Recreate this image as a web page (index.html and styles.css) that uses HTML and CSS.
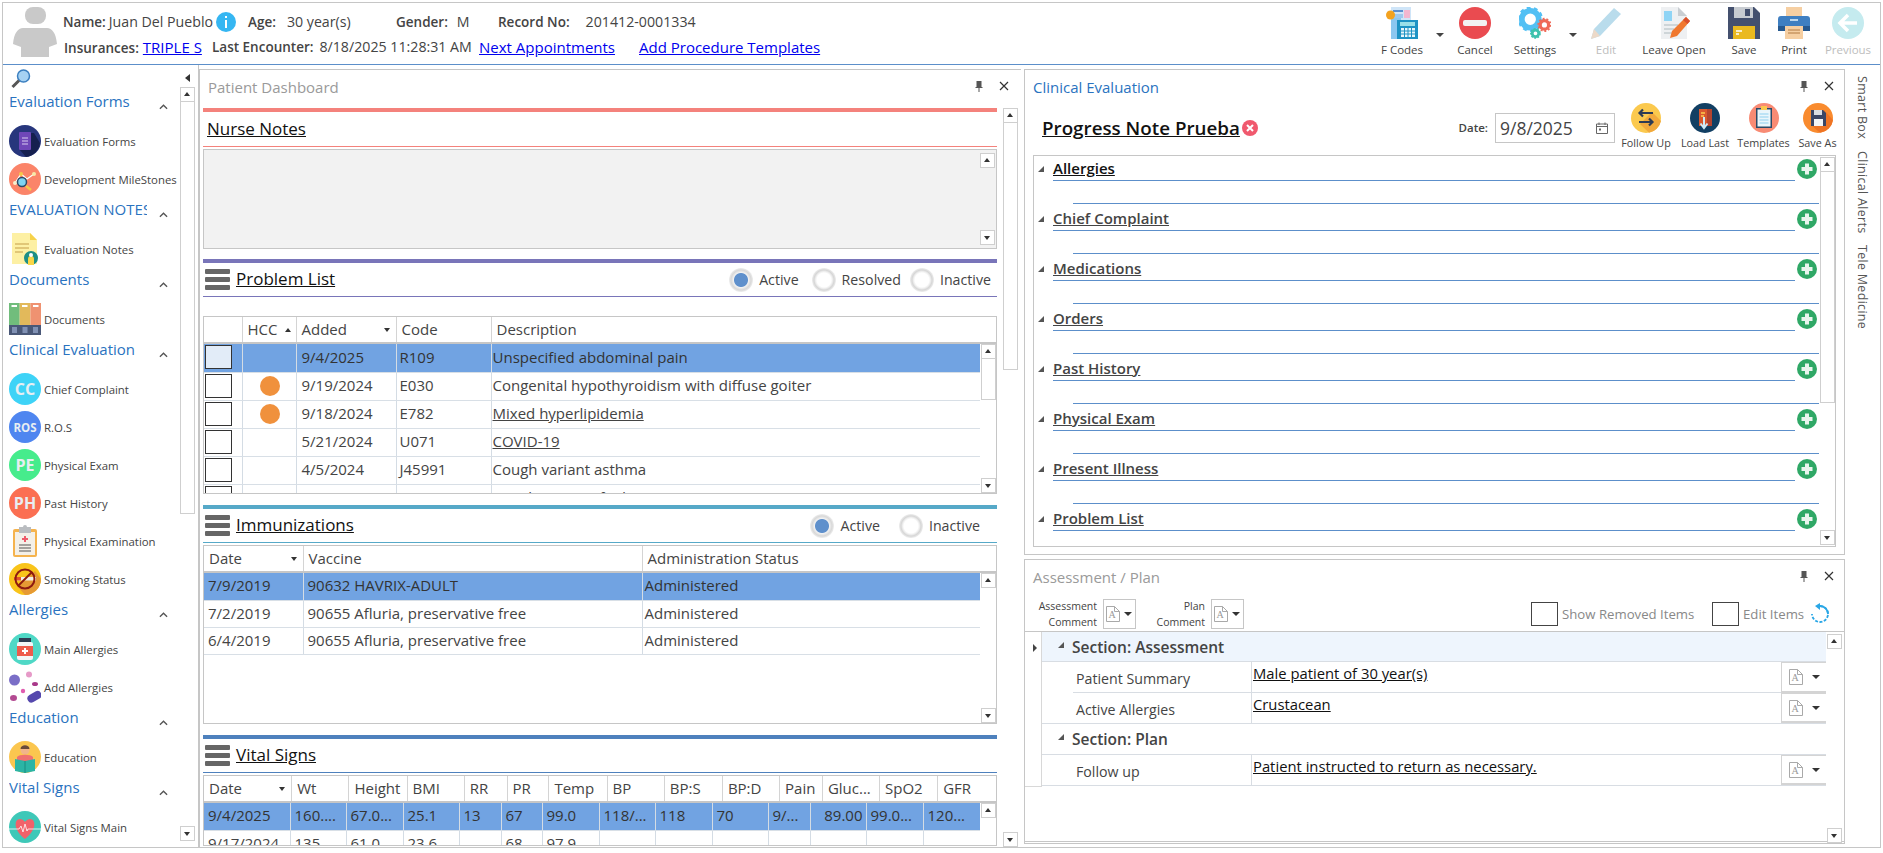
FILE: index.html
```html
<!DOCTYPE html>
<html lang="en">
<head>
<meta charset="utf-8">
<title>Progress Note</title>
<link rel="stylesheet" href="styles.css">
</head>
<body>
<svg class="defs" width="0" height="0">
  <symbol id="plus" viewBox="0 0 20 20"><circle cx="10" cy="10" r="10" fill="#2fa866"/><path d="M10 4.500v11M4.500 10h11" stroke="#e9f5ee" stroke-width="4"/></symbol>
  <symbol id="ham" viewBox="0 0 25 21"><rect width="25" height="5" rx="1" fill="#666"/><rect y="8" width="25" height="5" rx="1" fill="#666"/><rect y="16" width="25" height="5" rx="1" fill="#666"/></symbol>
  <symbol id="pin" viewBox="0 0 10 12"><path d="M2.500 1h5v6h1v1H5.500v4h-1V8H1.500V7h1z" fill="#555"/></symbol>
  <symbol id="close" viewBox="0 0 10 10"><path d="M1 1l8 8M9 1l-8 8" stroke="#333" stroke-width="1.200"/></symbol>
  <symbol id="chev" viewBox="0 0 10 6"><path d="M1 5l4-4 4 4" fill="none" stroke="#555" stroke-width="1.500"/></symbol>
  <symbol id="doca" viewBox="0 0 16 18"><path d="M1.500 1.500h8l5 5v10h-13z" fill="#fff" stroke="#a9a9a9"/><path d="M9.500 1.500v5h5" fill="none" stroke="#a9a9a9"/><text x="3.500" y="13" class="doc-a">A</text></symbol>
</svg>
<div class="app">
  <header class="top">
    <svg class="avatar" viewBox="0 0 44 50"><rect x="12" y="0" width="21" height="17" rx="8" fill="#c9c9c9"/><path d="M10 21h24c5 0 9 5 10 16l-8 3v10H8V40l-8-3C1 26 5 21 10 21z" fill="#c9c9c9"/></svg>
    <div class="patient">
      <div class="pline">
        <span class="f f-name"><b>Name:</b>Juan Del Pueblo</span>
        <svg class="info" viewBox="0 0 20 20"><circle cx="10" cy="10" r="10" fill="#35b6f2"/><rect x="9" y="8" width="2" height="8" fill="#fff"/><rect x="9" y="4" width="2" height="2" fill="#fff"/></svg>
        <span class="f f-age"><b>Age:</b>30 year(s)</span>
        <span class="f f-gen"><b>Gender:</b>M</span>
        <span class="f f-rec"><b>Record No:</b>201412-0001334</span>
      </div>
      <div class="pline">
        <span class="f f-ins"><b>Insurances:</b><a href="#">TRIPLE S</a></span>
        <span class="f f-last"><b>Last Encounter:</b>8/18/2025 11:28:31 AM</span>
        <a class="f-next" href="#">Next Appointments</a>
        <a class="f-add" href="#">Add Procedure Templates</a>
      </div>
    </div>
    <nav class="tools">
      <div class="tool t-fc"><svg class="ti" viewBox="0 0 32 32"><rect x="5" y="0" width="20" height="26" fill="#cfe5f8"/><rect x="7" y="3" width="10" height="2" fill="#5a8fd0"/><rect x="18" y="3" width="6" height="8" fill="#f3b6d0"/><rect x="7" y="7" width="10" height="4" fill="#9cc8ee"/><rect x="5" y="11" width="10" height="21" fill="#8cc7f0"/><rect x="11" y="13" width="21" height="19" fill="#1f93c4"/><rect x="14" y="15" width="15" height="4" fill="#9be0e8"/><path d="M15 21h14v9H15z" fill="#e8f6fb"/><path d="M18.500 21v9M22 21v9M25.500 21v9M15 24h14M15 27h14" stroke="#1f93c4"/><circle cx="4.500" cy="8" r="4.500" fill="#f3a21f"/></svg><span>F Codes</span></div>
      <i class="drop d-fc"></i>
      <div class="tool t-cancel"><svg class="ti" viewBox="0 0 32 32"><circle cx="16" cy="16" r="16" fill="#ea4b50"/><rect x="4" y="13" width="24" height="6" rx="2" fill="#f2f2f2"/></svg><span>Cancel</span></div>
      <div class="tool t-set"><svg class="ti" viewBox="0 0 34 32"><circle cx="12" cy="12" r="9" fill="none" stroke="#53c0f4" stroke-width="6"/><circle cx="12" cy="12" r="12" fill="none" stroke="#53c0f4" stroke-width="3" stroke-dasharray="4 3.500"/><circle cx="12" cy="12" r="4" fill="#fff"/><circle cx="27" cy="18" r="4.500" fill="none" stroke="#ef6a58" stroke-width="3.500"/><circle cx="27" cy="18" r="6.500" fill="none" stroke="#ef6a58" stroke-width="2" stroke-dasharray="2 2"/><circle cx="17.500" cy="27" r="3.500" fill="none" stroke="#3fc2ae" stroke-width="3"/><circle cx="17.500" cy="27" r="5" fill="none" stroke="#3fc2ae" stroke-width="1.500" stroke-dasharray="2 1.500"/></svg><span>Settings</span></div>
      <i class="drop d-set"></i>
      <div class="tool t-edit off"><svg class="ti" viewBox="0 0 32 32"><path d="M24 1l7 6L10 29 1 32l3-10z" fill="#b9dcec"/><path d="M4 22l6 7-9 3z" fill="#ecd9c8"/></svg><span>Edit</span></div>
      <div class="tool t-leave"><svg class="ti" viewBox="0 0 32 32"><path d="M3 0h17l9 9v23H3z" fill="#eef0f2"/><path d="M20 0l9 9h-9z" fill="#c9ced2"/><rect x="6" y="4" width="8" height="10" fill="#8fd4f5"/><path d="M6 18h14M6 22h10M6 26h8" stroke="#c4cbd0" stroke-width="1.500"/><path d="M28 10l4 4-13 15-7 2 2-7z" fill="#f0782f"/><path d="M28 10l4 4-2.500 3-4.500-4z" fill="#d9502c"/></svg><span>Leave Open</span></div>
      <div class="tool t-save"><svg class="ti" viewBox="0 0 32 32"><path d="M0 0h26l6 6v26H0z" fill="#44506e"/><rect x="6" y="0" width="19" height="11" fill="#c8ccd1"/><rect x="17" y="2" width="5" height="7" fill="#44506e"/><rect x="5" y="19" width="22" height="13" fill="#eab91f"/><path d="M8 24h6M8 27h3" stroke="#fff" stroke-width="1.500"/></svg><span>Save</span></div>
      <div class="tool t-print"><svg class="ti" viewBox="0 0 32 32"><rect x="8" y="0" width="16" height="10" fill="#f6cfa2"/><path d="M3 9h26a3 3 0 013 3v12H0V12a3 3 0 013-3z" fill="#3f7fc1"/><rect x="12" y="12" width="8" height="2" fill="#bcd7ee"/><rect x="0" y="19" width="32" height="5" fill="#27598f"/><rect x="7" y="19" width="18" height="13" fill="#f6cfa2"/><path d="M10 23h12M10 26h12" stroke="#b27a42"/></svg><span>Print</span></div>
      <div class="tool t-prev off"><svg class="ti" viewBox="0 0 32 32"><circle cx="16" cy="16" r="16" fill="#c5ebef"/><path d="M16 8l-8 8 8 8M8 16h17" fill="none" stroke="#fff" stroke-width="3.500"/></svg><span>Previous</span></div>
    </nav>
  </header>

  <main class="work">
    <aside class="nav">
      <div class="nav-list">
        <div class="nav-top">
          <svg class="search" viewBox="0 0 20 20"><circle cx="12.500" cy="7" r="6" fill="#a6d2f3" stroke="#3b7fc0" stroke-width="1.500"/><path d="M8 11.500L1.500 18" stroke="#555" stroke-width="3"/></svg>
        </div>
        <div class="grp"><span class="grp-t">Evaluation Forms</span><svg class="chev"><use href="#chev"/></svg></div>
        <div class="it"><svg class="ic" viewBox="0 0 32 32"><circle cx="16" cy="16" r="16" fill="#27367c"/><path d="M12 8h13l6 10A16 16 0 0117 32L10 24z" fill="#15204f"/><rect x="10" y="7" width="12" height="18" rx="1" fill="#6f47b8"/><path d="M13 13h6M13 16h6M13 19h6" stroke="#d8ccf0"/></svg><span>Evaluation Forms</span></div>
        <div class="it"><svg class="ic" viewBox="0 0 32 32"><circle cx="16" cy="16" r="16" fill="#fb8469"/><path d="M6 20l6-9 6 5 7-5" fill="none" stroke="#fff" stroke-width="1.200"/><circle cx="6" cy="20" r="2" fill="#f6f0d0"/><circle cx="12" cy="11" r="2" fill="#f7c948"/><circle cx="25" cy="11" r="2" fill="#f7e9a8"/><circle cx="13" cy="19" r="4.500" fill="#7fd4f2" stroke="#2c4a66" stroke-width="1.500"/><path d="M17 23l5 4" stroke="#f7c948" stroke-width="2.500"/></svg><span>Development MileStones</span></div>
        <div class="grp"><span class="grp-t">EVALUATION NOTES</span><svg class="chev"><use href="#chev"/></svg></div>
        <div class="it"><svg class="ic" viewBox="0 0 32 32"><path d="M3 0h18l7 7v24H3z" fill="#fdf0a4"/><path d="M21 0l7 7h-7z" fill="#f6d24b"/><path d="M6 11h14M6 15h14M6 19h8" stroke="#d8b968" stroke-width="1.500"/><circle cx="22" cy="25" r="7" fill="#1d8f86"/><path d="M19 32v-6a3 3 0 016 0v6z" fill="#f9d648"/><circle cx="22" cy="22" r="2" fill="#fff"/></svg><span>Evaluation Notes</span></div>
        <div class="grp"><span class="grp-t">Documents</span><svg class="chev"><use href="#chev"/></svg></div>
        <div class="it"><svg class="ic" viewBox="0 0 32 32"><rect width="10.700" height="24" fill="#71bd7c"/><rect x="10.700" width="10.700" height="24" fill="#e2b95b"/><rect x="21.400" width="10.600" height="24" fill="#ef9271"/><rect y="22" width="32" height="10" fill="#4a5878"/><path d="M2.500 3h5.500M13 3h5.500M24 3h5.500" stroke="#fff" stroke-width="2"/><path d="M3 24h5v6H3zM13.500 24h5v6h-5zM24 24h5v6h-5z" fill="#8191b4"/></svg><span>Documents</span></div>
        <div class="grp"><span class="grp-t">Clinical Evaluation</span><svg class="chev"><use href="#chev"/></svg></div>
        <div class="it"><svg class="ic" viewBox="0 0 32 32"><circle cx="16" cy="16" r="16" fill="#3ed3f7"/><text x="16" y="22" class="ic-t">CC</text></svg><span>Chief Complaint</span></div>
        <div class="it"><svg class="ic" viewBox="0 0 32 32"><circle cx="16" cy="16" r="16" fill="#4f86f0"/><text x="16" y="21" class="ic-t ic-s">ROS</text></svg><span>R.O.S</span></div>
        <div class="it"><svg class="ic" viewBox="0 0 32 32"><circle cx="16" cy="16" r="16" fill="#46ec8c"/><text x="16" y="22" class="ic-t">PE</text></svg><span>Physical Exam</span></div>
        <div class="it"><svg class="ic" viewBox="0 0 32 32"><circle cx="16" cy="16" r="16" fill="#fb6f52"/><text x="16" y="22" class="ic-t">PH</text></svg><span>Past History</span></div>
        <div class="it"><svg class="ic" viewBox="0 0 32 32"><rect x="4" y="4" width="24" height="28" rx="2" fill="#f5b34e"/><rect x="6" y="7" width="20" height="23" fill="#f4f0e8"/><path d="M10 2h4a2 2 0 014 0h4v6H10z" fill="#b9bcc0"/><path d="M16 11v6M13 14h6" stroke="#ee5a6a" stroke-width="2"/><path d="M10 20h12M10 23h12M10 26h12" stroke="#555" stroke-width="1.200"/></svg><span>Physical Examination</span></div>
        <div class="it"><svg class="ic" viewBox="0 0 32 32"><circle cx="16" cy="16" r="16" fill="#f9c41a"/><path d="M26 8L32 16A16 16 0 0116 32L9 24z" fill="#e69a34"/><rect x="5" y="14" width="22" height="3.500" fill="#f3efe6"/><rect x="5" y="14" width="7" height="3.500" fill="#e2552c"/><circle cx="16" cy="16" r="9.500" fill="none" stroke="#8e1a10" stroke-width="2"/><path d="M9 23l14-14" stroke="#8e1a10" stroke-width="2"/></svg><span>Smoking Status</span></div>
        <div class="grp"><span class="grp-t">Allergies</span><svg class="chev"><use href="#chev"/></svg></div>
        <div class="it"><svg class="ic" viewBox="0 0 32 32"><circle cx="16" cy="16" r="16" fill="#4fd8c6"/><rect x="10" y="5" width="12" height="4" fill="#2e3c52"/><rect x="8" y="9" width="16" height="18" rx="2" fill="#f3f6f8"/><rect x="8" y="13" width="16" height="10" fill="#ee5c4d"/><path d="M16 15v6M13 18h6" stroke="#fff" stroke-width="2"/></svg><span>Main Allergies</span></div>
        <div class="it"><svg class="ic" viewBox="0 0 32 32"><circle cx="5.500" cy="9" r="5.500" fill="#7a6ec7"/><circle cx="20" cy="3.500" r="3" fill="#e69ac8"/><ellipse cx="26" cy="13" rx="3" ry="2" fill="#a9398a"/><circle cx="14" cy="20" r="2.200" fill="#e05cb0"/><ellipse cx="4.500" cy="27" rx="3.500" ry="3" fill="#b34a92"/><rect x="18" y="22" width="15" height="8" rx="4" fill="#5548ad" transform="rotate(-30 25 26)"/></svg><span>Add Allergies</span></div>
        <div class="grp"><span class="grp-t">Education</span><svg class="chev"><use href="#chev"/></svg></div>
        <div class="it"><svg class="ic" viewBox="0 0 32 32"><circle cx="16" cy="16" r="16" fill="#fbc64f"/><circle cx="16" cy="9" r="4.500" fill="#f2b48a"/><path d="M11.500 8c0-5 9-5 9 0z" fill="#6a4a3a"/><path d="M8 16c2-3 14-3 16 0v6H8z" fill="#ef7070"/><path d="M6 18l10 2 10-2v12l-10 2-10-2z" fill="#2bb5a5"/><path d="M16 20v12" stroke="#1d8c80"/></svg><span>Education</span></div>
        <div class="grp"><span class="grp-t">Vital Signs</span><svg class="chev"><use href="#chev"/></svg></div>
        <div class="it"><svg class="ic" viewBox="0 0 32 32"><circle cx="16" cy="16" r="16" fill="#3fc8b8"/><path d="M16 28C4 19 5 8 11 8c3 0 5 3 5 3s2-3 5-3c6 0 7 11-5 20z" fill="#f2626a"/><path d="M0 18h10l2-3 2 6 2-8 2 7 1-2h13" fill="none" stroke="#fff" stroke-width=".8"/></svg><span>Vital Signs Main</span></div>
      </div>
      <div class="nav-side">
        <i class="tri-l"></i>
        <div class="vs vs-nav"><b class="up"></b><b class="thumb"></b><b class="dn"></b></div>
      </div>
    </aside>

    <section class="panel dash">
      <div class="ptitle"><span class="pt-gray">Patient Dashboard</span><svg class="pin"><use href="#pin"/></svg><svg class="x"><use href="#close"/></svg></div>
      <div class="dash-body">
        <div class="dash-col">
          <div class="bar c-red"></div>
          <div class="shead nurse l-red"><h2>Nurse Notes</h2></div>
          <div class="nbox"><div class="vs vs-note"><b class="up"></b><b class="dn"></b></div></div>

          <div class="bar c-pur mt10"></div>
          <div class="shead l-pur"><svg class="ham"><use href="#ham"/></svg><h2>Problem List</h2>
            <div class="radios r-prob"><label class="rad on"><i></i>Active</label><label class="rad"><i></i>Resolved</label><label class="rad"><i></i>Inactive</label></div>
          </div>
          <div class="grid g-prob">
            <table class="th"><colgroup><col class="p1"><col class="p2"><col class="p3"><col class="p4"><col></colgroup>
              <tr><th></th><th>HCC<i class="sort up-s"></i></th><th>Added<i class="sort"></i></th><th>Code</th><th>Description</th></tr></table>
            <div class="gb">
              <table class="tb"><colgroup><col class="p1"><col class="p2"><col class="p3"><col class="p4"><col></colgroup>
                <tr class="sel"><td><i class="cb"></i></td><td></td><td>9/4/2025</td><td>R109</td><td>Unspecified abdominal pain</td></tr>
                <tr><td><i class="cb"></i></td><td><i class="dot"></i></td><td>9/19/2024</td><td>E030</td><td>Congenital hypothyroidism with diffuse goiter</td></tr>
                <tr><td><i class="cb"></i></td><td><i class="dot"></i></td><td>9/18/2024</td><td>E782</td><td><u>Mixed hyperlipidemia</u></td></tr>
                <tr><td><i class="cb"></i></td><td></td><td>5/21/2024</td><td>U071</td><td><u>COVID-19</u></td></tr>
                <tr><td><i class="cb"></i></td><td></td><td>4/5/2024</td><td>J45991</td><td>Cough variant asthma</td></tr>
                <tr><td><i class="cb"></i></td><td></td><td>9/9/2023</td><td>R059</td><td>Cough, unspecified</td></tr>
              </table>
              <div class="vs vs-prob"><b class="up"></b><b class="thumb"></b><b class="dn"></b></div>
            </div>
          </div>

          <div class="bar c-teal mt11"></div>
          <div class="shead l-teal"><svg class="ham"><use href="#ham"/></svg><h2>Immunizations</h2>
            <div class="radios r-imm"><label class="rad on"><i></i>Active</label><label class="rad"><i></i>Inactive</label></div>
          </div>
          <div class="grid g-imm">
            <table class="th"><colgroup><col class="i1"><col class="i2"><col></colgroup>
              <tr><th>Date<i class="sort"></i></th><th>Vaccine</th><th>Administration Status</th></tr></table>
            <div class="gb">
              <table class="tb"><colgroup><col class="i1"><col class="i2"><col></colgroup>
                <tr class="sel"><td>7/9/2019</td><td>90632 HAVRIX-ADULT</td><td>Administered</td></tr>
                <tr><td>7/2/2019</td><td>90655 Afluria, preservative free</td><td>Administered</td></tr>
                <tr><td>6/4/2019</td><td>90655 Afluria, preservative free</td><td>Administered</td></tr>
              </table>
              <div class="vs vs-imm"><b class="up"></b><b class="dn"></b></div>
            </div>
          </div>

          <div class="bar c-blue mt11"></div>
          <div class="shead l-blue"><svg class="ham"><use href="#ham"/></svg><h2>Vital Signs</h2></div>
          <div class="grid g-vit">
            <table class="th"><colgroup><col class="v1"><col class="v2"><col class="v3"><col class="v4"><col class="v5"><col class="v6"><col class="v7"><col class="v8"><col class="v9"><col class="v10"><col class="v11"><col class="v12"><col class="v13"><col class="v14"></colgroup>
              <tr><th>Date<i class="sort"></i></th><th>Wt</th><th>Height</th><th>BMI</th><th>RR</th><th>PR</th><th>Temp</th><th>BP</th><th>BP:S</th><th>BP:D</th><th>Pain</th><th>Gluc...</th><th>SpO2</th><th>GFR</th></tr></table>
            <div class="gb">
              <table class="tb"><colgroup><col class="v1"><col class="v2"><col class="v3"><col class="v4"><col class="v5"><col class="v6"><col class="v7"><col class="v8"><col class="v9"><col class="v10"><col class="v11"><col class="v12"><col class="v13"><col class="v14"></colgroup>
                <tr class="sel"><td>9/4/2025</td><td>160....</td><td>67.0...</td><td>25.1</td><td>13</td><td>67</td><td>99.0</td><td>118/...</td><td>118</td><td>70</td><td>9/...</td><td class="num">89.00</td><td>99.0...</td><td>120...</td></tr>
                <tr><td>9/17/2024</td><td>135</td><td>61.0</td><td>23.6</td><td></td><td>68</td><td>97.9</td><td></td><td></td><td></td><td></td><td></td><td></td><td></td></tr>
              </table>
              <div class="vs vs-vit"><b class="up"></b></div>
            </div>
          </div>
        </div>
        <div class="vs vs-dash"><b class="up"></b><b class="thumb"></b><b class="dn"></b></div>
      </div>
    </section>

    <div class="rightcol">
      <section class="panel clin">
        <div class="ptitle"><span class="pt-blue">Clinical Evaluation</span><svg class="pin"><use href="#pin"/></svg><svg class="x x-r"><use href="#close"/></svg></div>
        <div class="note">
          <h1>Progress Note Prueba</h1>
          <svg class="note-x" viewBox="0 0 16 16"><circle cx="8" cy="8" r="8" fill="#f0596e"/><path d="M5 5l6 6M11 5l-6 6" stroke="#fff" stroke-width="2"/></svg>
          <span class="dlabel">Date:</span>
          <div class="dbox"><span>9/8/2025</span><svg class="cal" viewBox="0 0 12 12"><path d="M.5 2h11v9.500H.5zM.5 4.500h11M3 .5V3M9 .5V3" fill="none" stroke="#666"/><rect x="3" y="6.500" width="2" height="2" fill="#666"/></svg></div>
          <div class="acts">
            <div class="act a1"><svg viewBox="0 0 30 30"><circle cx="15" cy="15" r="15" fill="#fbc94e"/><path d="M21 9L30 18A15 15 0 0118 29.700L9 21z" fill="#f2a93c"/><path d="M22 10H9m3-3.500L8.500 10l3.500 3.500M8 19h13m-3-3.500l3.500 3.500-3.500 3.500" fill="none" stroke="#2d3b55" stroke-width="2.200"/></svg><span>Follow Up</span></div>
            <div class="act a2"><svg viewBox="0 0 30 30"><circle cx="15" cy="15" r="15" fill="#123f63"/><rect x="9" y="6" width="13" height="17" fill="#b4442f"/><rect x="9" y="6" width="8" height="17" fill="#d9582e"/><path d="M11 10h4M11 13h3" stroke="#fbc94e" stroke-width="1.500"/><path d="M14 14v10m-3.500-3.500L14 25l3.500-4.500" fill="none" stroke="#cdeaf6" stroke-width="2"/></svg><span>Load Last</span></div>
            <div class="act a3"><svg viewBox="0 0 30 30"><circle cx="15" cy="15" r="15" fill="#f88b74"/><rect x="7" y="5" width="16" height="20" fill="#2b4a66"/><rect x="8.500" y="6.500" width="13" height="17" fill="#eaf6fb"/><path d="M10.500 11h9M10.500 14h9M10.500 17h9M10.500 20h9" stroke="#8fd0ef"/><rect x="12" y="3" width="6" height="4" fill="#fbc94e"/></svg><span>Templates</span></div>
            <div class="act a4"><svg viewBox="0 0 30 30"><circle cx="15" cy="15" r="15" fill="#f98b2e"/><path d="M21 7L30 17A15 15 0 0117 29.800L8 22z" fill="#ef7424"/><path d="M8 7h12l3 3v13H8z" fill="#3a4666"/><rect x="11" y="7" width="8" height="5" fill="#d9dde2"/><rect x="11" y="16" width="9" height="7" fill="#f3f5f7"/></svg><span>Save As</span></div>
          </div>
        </div>
        <div class="tree">
          <div class="tree-list">
            <div class="tr"><div class="tr-h"><i class="tri"></i><h3 class="strong">Allergies</h3><svg class="add"><use href="#plus"/></svg></div><div class="tr-l"></div></div>
            <div class="tr"><div class="tr-h"><i class="tri"></i><h3>Chief Complaint</h3><svg class="add"><use href="#plus"/></svg></div><div class="tr-l"></div></div>
            <div class="tr"><div class="tr-h"><i class="tri"></i><h3>Medications</h3><svg class="add"><use href="#plus"/></svg></div><div class="tr-l"></div></div>
            <div class="tr"><div class="tr-h"><i class="tri"></i><h3>Orders</h3><svg class="add"><use href="#plus"/></svg></div><div class="tr-l"></div></div>
            <div class="tr"><div class="tr-h"><i class="tri"></i><h3>Past History</h3><svg class="add"><use href="#plus"/></svg></div><div class="tr-l"></div></div>
            <div class="tr"><div class="tr-h"><i class="tri"></i><h3>Physical Exam</h3><svg class="add"><use href="#plus"/></svg></div><div class="tr-l"></div></div>
            <div class="tr"><div class="tr-h"><i class="tri"></i><h3>Present Illness</h3><svg class="add"><use href="#plus"/></svg></div><div class="tr-l"></div></div>
            <div class="tr"><div class="tr-h"><i class="tri"></i><h3>Problem List</h3><svg class="add"><use href="#plus"/></svg></div></div>
          </div>
          <div class="vs vs-tree"><b class="up"></b><b class="thumb"></b><b class="dn"></b></div>
        </div>
      </section>

      <section class="panel plan">
        <div class="ptitle pt-plan"><span class="pt-gray">Assessment / Plan</span><svg class="pin"><use href="#pin"/></svg><svg class="x x-r"><use href="#close"/></svg></div>
        <div class="plan-tools">
          <span class="cm cm-a">Assessment<br>Comment</span>
          <span class="ddoc"><svg class="docsvg"><use href="#doca"/></svg><i class="mini"></i></span>
          <span class="cm cm-p">Plan<br>Comment</span>
          <span class="ddoc"><svg class="docsvg"><use href="#doca"/></svg><i class="mini"></i></span>
          <i class="chk c-show"></i><span class="chk-l chk-wide">Show Removed Items</span>
          <i class="chk"></i><span class="chk-l">Edit Items</span>
          <svg class="refresh" viewBox="0 0 20 22"><path d="M10 3a8 8 0 11-8 8" fill="none" stroke="#2aa7e6" stroke-width="1.800" stroke-dasharray="3 1.500"/><path d="M10 3a8 8 0 018 8" fill="none" stroke="#2aa7e6" stroke-width="1.800"/><path d="M10 0v7L5 3z" fill="#2aa7e6"/></svg>
        </div>
        <div class="pgrid">
          <div class="pg-gutter"><i class="tri-r"></i></div>
          <div class="pg-main">
            <div class="ps ps-a"><i class="tri"></i>Section: Assessment</div>
            <div class="pr pr-in"><div class="pl">Patient Summary</div><div class="pv"><u>Male patient of 30 year(s)</u></div><div class="pb"><svg class="docsvg"><use href="#doca"/></svg><i class="mini"></i></div></div>
            <div class="pr"><div class="pl">Active Allergies</div><div class="pv"><u>Crustacean</u></div><div class="pb"><svg class="docsvg"><use href="#doca"/></svg><i class="mini"></i></div></div>
            <div class="ps"><i class="tri"></i>Section: Plan</div>
            <div class="pr"><div class="pl">Follow up</div><div class="pv"><u>Patient instructed to return as necessary.</u></div><div class="pb"><svg class="docsvg"><use href="#doca"/></svg><i class="mini"></i></div></div>
          </div>
          <div class="vs vs-plan"><b class="up"></b><b class="dn"></b></div>
        </div>
      </section>
    </div>

    <div class="rail"><span>Smart Box</span><span>Clinical Alerts</span><span>Tele Medicine</span></div>
  </main>
</div>
</body>
</html>
```
FILE: styles.css
```css
* { box-sizing: border-box; }
html, body { margin: 0; padding: 0; background: #fff; }
body { width: 1883px; height: 853px; overflow: hidden; font-family: "Open Sans", "Noto Sans", sans-serif; font-size: 14.2px; color: #444; }
.defs { display: block; height: 0; }
i { display: block; font-style: normal; }
a { color: #0000ee; text-decoration: underline; }
h1, h2, h3 { margin: 0; font-weight: 400; }

.app { margin: 2px 2px 0; width: 1879px; height: 846px; border: 1px solid #c6c6c6; display: flex; flex-direction: column; }

/* header */
.top { height: 62px; flex: none; border-bottom: 1px solid #5c8fca; display: flex; }
.avatar { width: 44px; height: 50px; margin: 4px 0 0 10px; flex: none; }
.patient { flex: none; width: 1000px; padding: 6px 0 0 6px; }
.pline { height: 25px; display: flex; align-items: center; white-space: nowrap; }
.pline a { font-size: 15px; }
.f b { font-weight: 600; color: #444; font-size: 13.5px; }
.f-name { width: 153px; flex: none; } .f-name b { margin-right: 3px; }
.info { width: 20px; height: 20px; margin-right: 12px; flex: none; }
.f-age { width: 148px; flex: none; } .f-age b { margin-right: 11px; }
.f-gen { width: 102px; flex: none; } .f-gen b { margin-right: 9px; }
.f-rec b { margin-right: 16px; }
.f-ins { width: 149px; flex: none; padding-left: 1px; } .f-ins b { margin-right: 4px; }
.f-last { width: 267px; flex: none; } .f-last b { margin-right: 6px; }
.f-next { width: 160px; flex: none; }
.tools { margin-left: auto; display: flex; padding-top: 4px; }
.tool { display: flex; flex-direction: column; align-items: center; font-size: 11.5px; color: #444; flex: none; }
.tool span { margin-top: 3px; white-space: nowrap; }
.tool.off span { color: #bdbdbd; }
.ti { width: 32px; height: 32px; flex: none; }
.t-fc { width: 60px; }
.t-cancel { width: 50px; margin-left: 6px; }
.t-set { width: 60px; margin-left: 5px; }
.t-edit { width: 32px; margin-left: 13px; }
.t-leave { width: 72px; margin-left: 16px; }
.t-save { width: 36px; margin-left: 16px; }
.t-print { width: 36px; margin-left: 14px; }
.t-prev { width: 46px; margin-left: 13px; margin-right: 9px; }
.drop { width: 8px; height: 4px; border-left: 4px solid transparent; border-right: 4px solid transparent; border-top: 4px solid #444; margin: 26px 0 0 4px; flex: none; }

/* main */
.work { flex: 1; display: flex; min-height: 0; }
.nav { width: 196px; flex: none; display: flex; border-right: 1px solid #c6c6c6; }
.nav-list { width: 177px; flex: none; overflow: hidden; }
.nav-top { height: 25px; padding: 4px 0 0 8px; }
.search { width: 20px; height: 20px; display: block; }
.grp { height: 32px; display: flex; align-items: flex-start; padding-left: 6px; }
.grp-t { width: 138px; overflow: hidden; white-space: nowrap; font-size: 15px; line-height: 22px; color: #2a73c0; flex: none; }
.chev { width: 9px; height: 6px; margin: 14px 0 0 12px; flex: none; }
.it { height: 38px; display: flex; align-items: center; padding-left: 6px; white-space: nowrap; font-size: 11.4px; color: #444; }
.ic { width: 32px; height: 32px; margin-right: 3px; flex: none; }
.ic-t { font-family: "Open Sans", sans-serif; font-weight: 700; font-size: 16px; fill: #e8eef2; text-anchor: middle; }
.ic-s { font-size: 11.5px; }
.nav-side { width: 18px; flex: none; padding-top: 9px; display: flex; flex-direction: column; }
.tri-l { width: 0; height: 0; border-top: 4px solid transparent; border-bottom: 4px solid transparent; border-right: 5px solid #333; margin: 0 0 5px 5px; }
.vs { width: 15px; flex: none; display: flex; flex-direction: column; justify-content: space-between; }
.vs b { display: block; height: 15px; border: 1px solid #cfcfcf; background: #fff; position: relative; flex: none; }
.vs .up::after, .vs .dn::after { content: ""; position: absolute; left: 3px; width: 0; height: 0; border-left: 3.500px solid transparent; border-right: 3.500px solid transparent; }
.vs .up::after { top: 4px; border-bottom: 4px solid #333; }
.vs .dn::after { top: 5px; border-top: 4px solid #333; }
.vs-nav { height: 754px; }
.vs-nav .thumb { height: 412px; margin-bottom: auto; border-top: 0; }

.panel { border: 1px solid #c6c6c6; display: flex; flex-direction: column; background: #fff; }
.dash { width: 822px; flex: none; margin-top: 4px; border-bottom: 0; border-right: 0; min-height: 0; overflow: hidden; }
.ptitle { height: 38px; flex: none; display: flex; align-items: flex-start; padding: 7px 0 0 8px; font-size: 15px; line-height: 20px; }
.pt-gray { color: #9a9a9a; }
.pt-blue { color: #2a73c0; }
.pin { width: 10px; height: 12px; margin: 3px 15px 0 auto; flex: none; }
.x { width: 10px; height: 10px; margin: 4px 12px 0 0; flex: none; }
.x-r { margin-right: 10px; }
.dash-body { flex: 1; display: flex; min-height: 0; }
.dash-col { width: 794px; margin-left: 3px; flex: none; overflow: hidden; }
.vs-dash { margin-left: 6px; height: 100%; }
.vs-dash .thumb { height: 247px; margin-bottom: auto; border-top: 0; }

.bar { height: 4px; }
.c-red { background: #f4827c; } .c-pur { background: #7975b9; } .c-teal { background: #56a9c8; } .c-blue { background: #4e81bd; }
.mt10 { margin-top: 10px; } .mt11 { margin-top: 11px; }
.shead { height: 34px; display: flex; align-items: center; padding-left: 2px; border-bottom: 1px solid; }
.shead.nurse { height: 35px; padding-left: 4px; margin-bottom: 2px; }
.l-red { border-color: #f4827c; } .l-pur { border-color: #7975b9; } .l-teal { border-color: #56a9c8; margin-bottom: 2px; } .l-blue { border-color: #4e81bd; margin-bottom: 2px; }
.shead h2 { font-size: 17px; color: #111; text-decoration: underline; line-height: 22px; padding-bottom: 1px; }
.ham { width: 25px; height: 21px; margin-right: 6px; flex: none; }
.nbox { height: 100px; background: #f2f2f2; border: 1px solid #c6c6c6; display: flex; justify-content: flex-end; padding: 3px 1px; }
.vs-note { height: 92px; }
.radios { margin-left: auto; display: flex; align-items: center; font-size: 14.2px; }
.rad { display: flex; align-items: center; }
.rad i { width: 24px; height: 24px; border-radius: 50%; background: radial-gradient(circle, #fff 0 7px, #eee 8.500px, #d6d6d6 10px, #eeeeee 12px); margin-right: 6px; flex: none; }
.rad.on i { background: radial-gradient(circle, #5f90cc 0 6.500px, #f2f2f2 7.500px, #d8d8d8 10px, #eeeeee 12px); }
.r-prob { padding-right: 6px; } .r-prob .rad + .rad { margin-left: 13px; } .r-prob .rad + .rad + .rad { margin-left: 9px; }
.r-imm { padding-right: 17px; } .r-imm .rad + .rad { margin-left: 19px; }
.g-prob { margin-top: 19px; height: 178px; }
.g-imm { height: 179px; }
.g-vit { height: 71px; }
.grid { border: 1px solid #c6c6c6; overflow: hidden; }
.grid table { border-collapse: collapse; table-layout: fixed; width: 776px; font-size: 15px; color: #444; flex: none; align-self: flex-start; }
.grid table.th { width: 792px; height: 27px; }
.th th { font-weight: 400; text-align: left; padding: 0 0 1px 5px; border-right: 1px solid #d4d4d4; border-bottom: 2px solid #c6c6c6; position: relative; white-space: nowrap; overflow: hidden; }
.th th:last-child { border-right: 0; }
.th .sort { position: absolute; right: 6px; top: 11px; width: 0; height: 0; border-left: 3.500px solid transparent; border-right: 3.500px solid transparent; border-top: 4px solid #333; }
.th .sort.up-s { right: 5px; border-top: 0; border-bottom: 4px solid #333; }
.gb { display: flex; overflow: hidden; height: calc(100% - 27px); }
.tb td { height: 28px; padding: 0 0 2px 2px; border-right: 1px solid #d4dce4; border-bottom: 1px solid #d8dfe6; white-space: nowrap; overflow: hidden; }
.tb td:last-child { border-right: 0; }
.sel td { background: #71a3e2; color: #333; }
.cb { width: 27px; height: 24px; border: 1px solid #333; background: #fff; margin: 1px 0 0 -1px; }
.sel .cb { background: #e2ecf8; }
.dot { width: 20px; height: 20px; border-radius: 50%; background: #f0913d; margin: 1px 0 0 15px; }
.p1 { width: 38px; } .p2 { width: 54px; } .p3 { width: 100px; } .p4 { width: 95px; }
.tb td:nth-child(n+3) { padding-left: 5px; }
.g-prob .tb td:nth-child(4) { padding-left: 3px; }
.g-prob .tb td:nth-child(5) { padding-left: 1px; }
.i1 { width: 99px; } .i2 { width: 339px; }
.g-imm .tb td, .g-vit .tb td { padding-left: 4px; height: 27px; }
.g-imm .tb td:last-child { padding-left: 2px; }
.v1 { width: 86px; } .v2 { width: 56px; } .v3 { width: 57px; } .v4 { width: 56px; } .v5 { width: 42px; } .v6 { width: 41px; } .v7 { width: 57px; } .v8 { width: 56px; } .v9 { width: 57px; } .v10 { width: 56px; } .v11 { width: 42px; } .v12 { width: 56px; } .v13 { width: 57px; } .v14 { width: 57px; }
.g-vit .tb td.num { text-align: right; padding-right: 3px; }
.vs-prob { height: 149px; margin-left: 1px; }
.vs-prob .thumb { height: 41px; margin-bottom: auto; border-top: 0; }
.vs-imm { height: 150px; margin-left: 1px; }
.vs-vit { margin-left: 1px; }

/* right column */
.rightcol { width: 821px; flex: none; margin-left: 3px; margin-top: 4px; display: flex; flex-direction: column; gap: 4px; }
.clin { height: 486px; flex: none; }
.clin .ptitle { height: 34px; }
.note { height: 47px; flex: none; display: flex; align-items: center; padding-left: 17px; }
.note h1 { font-size: 18.8px; font-weight: 600; color: #111; text-decoration: underline; white-space: nowrap; }
.note-x { width: 16px; height: 16px; margin-left: 2px; flex: none; }
.dlabel { margin-left: auto; font-size: 11.5px; font-weight: 600; margin-right: 7px; }
.dbox { width: 120px; height: 30px; border: 1px solid #c6c6c6; display: flex; align-items: center; padding: 0 6px 0 4px; font-size: 17.5px; justify-content: space-between; }
.cal { width: 12px; height: 12px; flex: none; }
.acts { display: flex; gap: 10px; margin: -2px 7px 0 6px; }
.act { display: flex; flex-direction: column; align-items: center; font-size: 10.8px; white-space: nowrap; flex: none; }
.a1 { width: 50px; } .a2 { width: 48px; } .a3 { width: 49px; } .a4 { width: 39px; }
.act svg { width: 30px; height: 30px; margin-bottom: 2px; }
.tree { margin: 4px 8px 0; height: 392px; border: 1px solid #c6c6c6; display: flex; flex: none; }
.tree-list { width: 785px; flex: none; overflow: hidden; }
.tr { height: 50px; }
.tr-h { height: 25px; display: flex; align-items: center; }
.tri { width: 0; height: 0; border-left: 6px solid transparent; border-bottom: 6px solid #555; margin: 0 9px 0 4px; flex: none; }
.tr-h h3 { flex: none; width: 742px; height: 25px; border-bottom: 1px solid #5c8fca; font-size: 15px; font-weight: 600; color: #444; text-decoration: underline; line-height: 24px; }
.tr-h h3.strong { color: #111; }
.add { width: 20px; height: 20px; margin-left: 2px; flex: none; }
.tr-l { height: 1px; margin: 22px 0 0 39px; background: #5c8fca; }
.vs-tree { height: 388px; margin: 1px 0 0 1px; }
.vs-tree .thumb { height: 231px; margin-bottom: auto; border-top: 0; }

.plan { height: 285px; flex: none; }
.pt-plan { height: 36px; }
.plan-tools { height: 35px; flex: none; display: flex; align-items: center; font-size: 10.5px; }
.cm { text-align: right; line-height: 16px; flex: none; }
.cm-a { width: 72px; margin-right: 6px; }
.cm-p { width: 69px; margin-right: 6px; }
.ddoc { width: 33px; height: 30px; border: 1px solid #c6c6c6; display: flex; align-items: center; padding-left: 1px; flex: none; }
.docsvg { width: 16px; height: 18px; flex: none; }
.mini { width: 0; height: 0; border-left: 4px solid transparent; border-right: 4px solid transparent; border-top: 4px solid #333; margin-left: 3px; flex: none; }
.doc-a { font-family: "Liberation Serif", serif; font-size: 10px; fill: #999; }
.chk { width: 27px; height: 24px; border: 1px solid #444; flex: none; margin-right: 4px; }
.c-show { margin-left: 287px; }
.chk-l { font-size: 13.2px; color: #888; white-space: nowrap; }
.chk-wide { width: 150px; flex: none; }
.refresh { width: 20px; height: 22px; margin: 0 14px 0 auto; flex: none; }
.pgrid { flex: 1; display: flex; border-top: 1px solid #c6c6c6; border-bottom: 1px solid #c6c6c6; margin-bottom: 1px; min-height: 0; }
.pg-gutter { width: 17px; flex: none; border-right: 1px solid #d8d8d8; padding: 12px 0 0 8px; height: 155px; border-bottom: 1px solid #d8d8d8; }
.tri-r { width: 0; height: 0; border-top: 4px solid transparent; border-bottom: 4px solid transparent; border-left: 4px solid #444; }
.pg-main { width: 784px; flex: none; font-size: 14.2px; }
.ps { height: 31px; display: flex; align-items: center; padding-left: 16px; font-weight: 600; font-size: 15.5px; color: #444; border-bottom: 1px solid #d8dde3; }
.ps-a { height: 30px; background: #eef5fd; }
.ps .tri { margin: 0 8px 4px 0; }
.pr { height: 31px; display: flex; border-bottom: 1px solid #d8dde3; }
.pr-in { border-bottom: 0; }
.pl { width: 210px; flex: none; padding-left: 34px; line-height: 33px; border-right: 1px solid #d8dde3; white-space: nowrap; }
.pr-in .pl { background: linear-gradient(#d8dde3, #d8dde3) no-repeat 31px 100% / 100% 1px; }
.pv { flex: 1; line-height: 22px; padding-left: 1px; color: #111; font-size: 14.8px; }
.pr-in .pv { background: linear-gradient(#d8dde3, #d8dde3) no-repeat 0 100% / 100% 1px; }
.pb { width: 45px; flex: none; border: 1px solid #d4d4d4; border-right: 0; border-bottom-width: 2px; display: flex; align-items: center; justify-content: center; gap: 8px; }
.pb .mini { margin-left: 0; }
.vs-plan { height: 209px; margin: 2px 0 0 1px; }

.rail { flex: 1; display: flex; flex-direction: column; align-items: center; padding: 11px 0 0 0; }
.rail span { writing-mode: vertical-rl; font-size: 12.5px; letter-spacing: .3px; color: #555; white-space: nowrap; margin-bottom: 12px; }
```
